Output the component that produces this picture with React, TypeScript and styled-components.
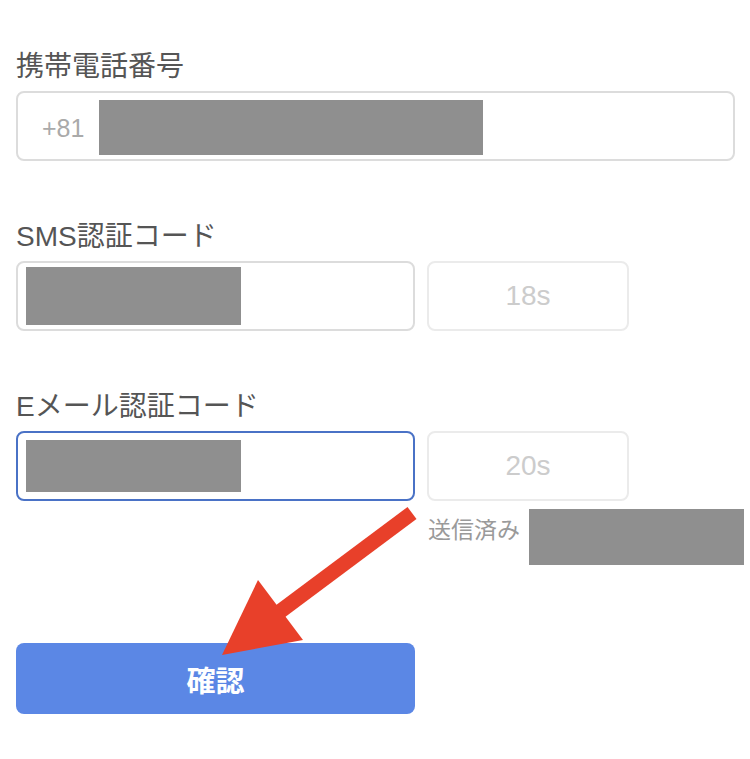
import React from 'react';
import styled, { createGlobalStyle } from 'styled-components';

const GlobalStyle = createGlobalStyle`
  html, body {
    margin: 0;
    padding: 0;
    background: #ffffff;
  }
  body {
    font-family: "Liberation Sans", "Noto Sans CJK JP", sans-serif;
  }
`;

// page layout
const Page = styled.div`
  position: relative;
  width: 750px;
  height: 759px;
  box-sizing: border-box;
  padding: 49px 15px 0 16px;
  display: flex;
  flex-direction: column;
  overflow: hidden;
`;

const Field = styled.div<{ $gap?: number }>`
  display: flex;
  flex-direction: column;
  margin-bottom: ${(p) => p.$gap ?? 0}px;
`;

const Label = styled.label`
  font-family: "Liberation Sans", "Noto Sans CJK JP", sans-serif;
  font-size: 28px;
  line-height: 36px;
  color: #555555;
  margin-bottom: 6px;
`;

const Row = styled.div`
  display: flex;
  gap: 12px;
  align-items: flex-start;
`;

const InputBox = styled.div<{ $width?: number; $focused?: boolean }>`
  box-sizing: border-box;
  width: ${(p) => (p.$width ? `${p.$width}px` : '100%')};
  height: 70px;
  border: 2px solid ${(p) => (p.$focused ? '#4a72c6' : '#dcdcdc')};
  border-radius: 8px;
  display: flex;
  align-items: center;
  padding-left: 8px;
  background: #fff;
`;

const Prefix = styled.span`
  font-family: "Liberation Sans", sans-serif;
  font-size: 25px;
  color: #aaaaaa;
  margin-left: 16px;
  margin-right: 15px;
  margin-top: 4px;
`;

// redacted parts of the screenshot
const Redact = styled.div<{ $w: number; $h: number; $dy?: number }>`
  width: ${(p) => p.$w}px;
  height: ${(p) => p.$h}px;
  margin-top: ${(p) => p.$dy ?? 0}px;
  background: #8f8f8f;
  flex-shrink: 0;
`;

const TimerCol = styled.div`
  display: flex;
  flex-direction: column;
  width: 202px;
`;

const Timer = styled.div`
  box-sizing: border-box;
  width: 202px;
  height: 70px;
  border: 2px solid #ebebeb;
  border-radius: 8px;
  display: flex;
  align-items: center;
  justify-content: center;
  font-family: "Liberation Sans", sans-serif;
  font-size: 28px;
  color: #cccccc;
`;

const Hint = styled.div`
  display: flex;
  align-items: flex-start;
  gap: 9px;
  margin-top: 8px;
  white-space: nowrap;
`;

const HintText = styled.span`
  font-family: "Noto Sans CJK JP", sans-serif;
  font-size: 23px;
  line-height: 30px;
  color: #9a9a9a;
  margin-top: 4px;
  margin-left: 1px;
`;

const Button = styled.button`
  box-sizing: border-box;
  width: 399px;
  height: 71px;
  margin-top: 78px;
  border: none;
  border-radius: 8px;
  background: #5b87e5;
  color: #ffffff;
  font-family: "Noto Sans CJK JP", sans-serif;
  font-weight: 700;
  font-size: 29px;
  cursor: pointer;
`;

const Arrow = styled.svg`
  position: absolute;
  left: 0;
  top: 0;
  pointer-events: none;
`;

const App = () => {
  return (
    <>
      <GlobalStyle />
      <Page>
        <Field $gap={58}>
          <Label>携帯電話番号</Label>
          <InputBox>
            <Prefix>+81</Prefix>
            <Redact $w={384} $h={55} $dy={3} />
          </InputBox>
        </Field>

        <Field $gap={58}>
          <Label>SMS認証コード</Label>
          <Row>
            <InputBox $width={399}>
              <Redact $w={215} $h={58} />
            </InputBox>
            <Timer>18s</Timer>
          </Row>
        </Field>

        <Field>
          <Label>Eメール認証コード</Label>
          <Row>
            <InputBox $width={399} $focused>
              <Redact $w={215} $h={52} />
            </InputBox>
            <TimerCol>
              <Timer>20s</Timer>
              <Hint>
                <HintText>送信済み</HintText>
                <Redact $w={215} $h={56} />
              </Hint>
            </TimerCol>
          </Row>
        </Field>

        <Button>確認</Button>

        <Arrow width="750" height="759" viewBox="0 0 750 759">
          <line x1="412" y1="513" x2="278" y2="613" stroke="#e8402a" strokeWidth="15" />
          <polygon points="222,655 258,580 303,640" fill="#e8402a" />
        </Arrow>
      </Page>
    </>
  );
};

export default App;
